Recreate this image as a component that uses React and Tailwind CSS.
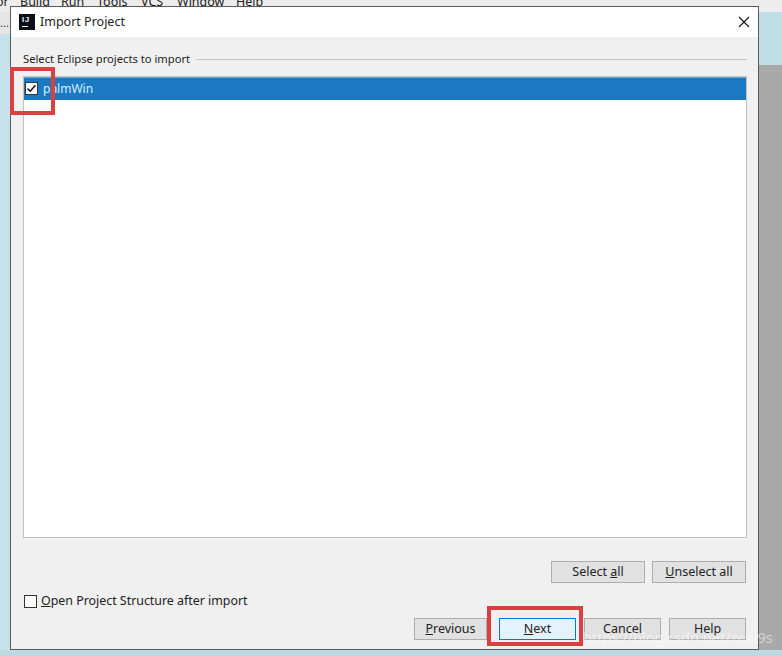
const FONT = { fontFamily: '"Noto Sans", "Liberation Sans", sans-serif' }

function Btn({ className = '', children, w = 'w-[77px]' }) {
  return (
    <div className={`${w} h-[22px] pt-px flex items-center justify-center border border-[#adadad] bg-[#e1e1e1] text-[12.5px] text-[#222] ${className}`}>
      {children}
    </div>
  )
}

export default function App() {
  return (
    <div className="relative w-[782px] h-[656px] overflow-hidden bg-[#e4e4e4]" style={FONT}>
      {/* window behind the dialog */}
      <div className="flex flex-col h-full">
        <div className="h-[12px] bg-[#ececec] overflow-hidden">
          <div className="flex -mt-[8px] text-[12.5px] text-[#222] leading-[20px] -ml-[4px]">
            <span className="w-[24px]">or</span>
            <span className="w-[41px]">Build</span>
            <span className="w-[36px]">Run</span>
            <span className="w-[44px]">Tools</span>
            <span className="w-[36px]">VCS</span>
            <span className="w-[59px]">Window</span>
            <span>Help</span>
          </div>
        </div>
        <div className="flex-1 flex justify-between">
          <div className="w-[10px] flex flex-col">
            <div className="h-[22px] bg-[#e6e6e6] text-[11px] leading-[22px] text-[#333]">...</div>
            <div className="flex-1 bg-[#c5e2ec]" />
          </div>
          <div className="w-[23px] flex flex-col">
            <div className="h-[53px] bg-[#bfdde7]" />
            <div className="flex-1 bg-[#a9a9a9]" />
          </div>
        </div>
        <div className="h-[6px] bg-[#bcd9e2]" />
      </div>

      {/* dialog */}
      <div className="absolute left-[10px] top-[6px] w-[749px] h-[644px] border border-[#5a5a5a] bg-[#f0f0f0] flex flex-col">
        <div className="h-[30px] bg-white flex items-center pl-[8px] pr-[8px] shrink-0">
          <div className="w-[16px] h-[16px] bg-[#0b0f17] flex flex-col items-start pl-[3px] pt-[2px]">
            <span className="text-white text-[7.5px] font-bold tracking-[1px] leading-[8px]" style={{ fontFamily: '"Liberation Sans", sans-serif' }}>IJ</span>
            <span className="w-[6px] h-[1px] bg-white mt-[2px]" />
          </div>
          <span className="ml-[5px] text-[12.5px] text-[#222]">Import Project</span>
          <svg className="ml-auto" width="12" height="12" viewBox="0 0 12 12" fill="none" stroke="#111" strokeWidth="1.1">
            <path d="M1 1 L11 11 M11 1 L1 11" />
          </svg>
        </div>

        <div className="flex-1 flex flex-col pl-[12px] pr-[11px]">
          <div className="h-[18px] mt-[13px] flex items-center">
            <span className="text-[11.2px] text-[#222] whitespace-nowrap">Select Eclipse projects to import</span>
            <div className="flex-1 h-px bg-[#c4c4c4] ml-[6px]" />
          </div>
          <div className="mt-[8px] h-[462px] border border-[#c0c0c0] bg-white">
            <div className="h-[23px] bg-[#1a79c2] flex items-center pl-[1px] border-t border-[#6aa8d8]">
              <div className="w-[13px] h-[13px] mb-[2px] bg-white border border-[#333] flex items-center justify-center">
                <svg width="11" height="11" viewBox="0 0 11 11" fill="none" stroke="#111" strokeWidth="1.5">
                  <path d="M1.5 5.5 L4.2 8.2 L9.5 2.2" />
                </svg>
              </div>
              <span className="ml-[5px] text-[12px] text-[#d6eeff]">palmWin</span>
            </div>
          </div>

          <div className="mt-[23px] pr-px flex justify-end gap-[7px]">
            <Btn w="w-[94px]">Select&nbsp;<span className="underline">a</span>ll</Btn>
            <Btn w="w-[94px]"><span className="underline">U</span>nselect all</Btn>
          </div>

          <div className="mt-[9px] h-[18px] flex items-center pl-px">
            <div className="w-[13px] h-[13px] bg-white border border-[#333]" />
            <span className="ml-[4px] text-[12.4px] text-[#222]"><span className="underline">O</span>pen Project Structure after import</span>
          </div>

          <div className="mt-[8px] pr-px flex justify-end">
            <Btn w="w-[73px]"><span className="underline">P</span>revious</Btn>
            <Btn className="ml-[12px] !bg-[#e5f1fb] !border-[#0078d7]"><span className="underline">N</span>ext</Btn>
            <Btn className="ml-[8px]">Cancel</Btn>
            <Btn className="ml-[8px]">Help</Btn>
          </div>
        </div>
      </div>

      {/* red annotation boxes */}
      <div className="absolute left-[10px] top-[67px] w-[45px] h-[48px] border-[4px] border-[#d9403f]" />
      <div className="absolute left-[487px] top-[606px] w-[96px] h-[40px] border-[4px] border-[#d9403f]" />

      {/* blog watermark */}
      <div className="absolute left-[583px] top-[627px] text-[14.5px] leading-[20px] text-white/50 whitespace-nowrap">https://blog.csdn.net/zeal9s</div>
    </div>
  )
}
